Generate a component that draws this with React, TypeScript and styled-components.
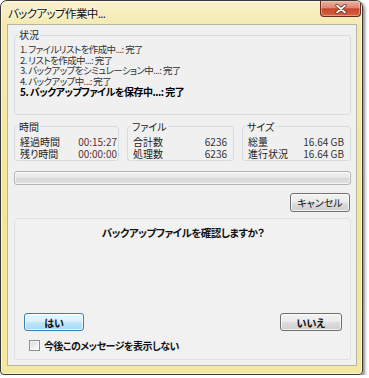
import styled, { createGlobalStyle } from "styled-components";

const jp = `"Noto Sans CJK JP", "Noto Sans", sans-serif`;

const GlobalStyle = createGlobalStyle`
  *, *::before, *::after { box-sizing: border-box; }
  html, body { margin: 0; padding: 0; background: #ffffff; }
  body {
    font-family: ${jp};
    font-feature-settings: "palt";
    color: #1e1e1e;
  }
`;

const steps = [
  "1. ファイルリストを作成中...: 完了",
  "2. リストを作成中...: 完了",
  "3. バックアップをシミュレーション中...: 完了",
  "4. バックアップ中...: 完了",
  "5. バックアップファイルを保存中...: 完了",
];

const stats = [
  {
    title: "時間",
    tone: "#5a3535",
    tight: true,
    rows: [
      ["経過時間", "00:15:27"],
      ["残り時間", "00:00:00"],
    ],
  },
  {
    title: "ファイル",
    tone: "#333333",
    tight: false,
    rows: [
      ["合計数", "6236"],
      ["処理数", "6236"],
    ],
  },
  {
    title: "サイズ",
    tone: "#333333",
    tight: false,
    rows: [
      ["総量", "16.64 GB"],
      ["進行状況", "16.64 GB"],
    ],
  },
];

export default function App() {
  return (
    <>
      <GlobalStyle />
      <Window>
        <TitleBar>
          <Title>バックアップ作業中...</Title>
          <CloseButton aria-label="閉じる">
            <svg width="12" height="10" viewBox="0 0 12 10">
              <path d="M2 1.5 L10 8.5 M10 1.5 L2 8.5" stroke="#5a2418" strokeWidth="3.2" strokeLinecap="round" />
              <path d="M2 1.5 L10 8.5 M10 1.5 L2 8.5" stroke="#ffffff" strokeWidth="1.8" strokeLinecap="round" />
            </svg>
          </CloseButton>
        </TitleBar>

        <Frame>
          <Client>
            <Group>
              <Legend>状況</Legend>
              <StepList>
                {steps.map((s, i) => (
                  <Step key={s} $done={i === steps.length - 1}>
                    {s}
                  </Step>
                ))}
              </StepList>
            </Group>

            <StatsGrid>
              {stats.map((g) => (
                <Group key={g.title}>
                  <Legend>{g.title}</Legend>
                  <StatRows $tight={g.tight}>
                    {g.rows.map(([label, value]) => (
                      <StatRow key={label}>
                        <span>{label}</span>
                        <StatValue $tone={g.tone}>{value}</StatValue>
                      </StatRow>
                    ))}
                  </StatRows>
                </Group>
              ))}
            </StatsGrid>

            <Progress />

            <CancelRow>
              <Button>キャンセル</Button>
            </CancelRow>

            <ConfirmPanel>
              <Question>バックアップファイルを確認しますか？</Question>
              <Spacer />
              <AnswerRow>
                <Button $primary $bold>
                  はい
                </Button>
                <Button $bold $wide>
                  いいえ
                </Button>
              </AnswerRow>
              <CheckRow>
                <CheckBox />
                <span>今後このメッセージを表示しない</span>
              </CheckRow>
            </ConfirmPanel>
          </Client>
        </Frame>
      </Window>
    </>
  );
}

const Window = styled.div`
  width: 363px;
  height: 375px;
  border: 1px solid #3a3a3a;
  border-radius: 7px 7px 4px 4px;
  background: linear-gradient(180deg, #f8f1cc 0%, #f4eab0 24px, #f2e697 60%, #f3e8a0 100%);
  box-shadow: 2px 2px 3px rgba(0, 0, 0, 0.45), inset 0 0 0 1px rgba(255, 255, 255, 0.6);
  display: flex;
  flex-direction: column;
  overflow: hidden;
`;

const TitleBar = styled.div`
  height: 23px;
  display: flex;
  justify-content: space-between;
  align-items: flex-start;
  padding: 0 1px 0 7px;
`;

const Title = styled.div`
  font-size: 11.5px;
  letter-spacing: -0.6px;
  line-height: 24px;
  color: #111;
  text-shadow: 0 0 6px rgba(255, 255, 255, 0.95), 0 0 2px rgba(255, 255, 255, 0.9);
`;

const CloseButton = styled.div`
  width: 41px;
  height: 16px;
  display: flex;
  align-items: center;
  justify-content: center;
  border: 1px solid #6b2a1f;
  border-top: none;
  border-radius: 0 0 4px 4px;
  background: linear-gradient(180deg, #eab3a3 0%, #de8670 45%, #c9482a 52%, #d66242 100%);
  box-shadow: inset 0 0 0 1px rgba(255, 220, 200, 0.45);
`;

const Frame = styled.div`
  flex: 1;
  display: flex;
  padding: 0 5px 8px 6px;
`;

const Client = styled.div`
  flex: 1;
  display: flex;
  flex-direction: column;
  border: 1px solid #b9b5a0;
  background: #f0f0f0;
  padding: 4px 5px 5px 6px;
`;

const Group = styled.fieldset`
  margin: 0;
  padding: 0;
  min-width: 0;
  border: 1px solid #d6dde2;
  border-radius: 3px;
`;

const Legend = styled.legend`
  margin-left: 3px;
  padding: 0 1px;
  font-size: 10px;
  line-height: 12px;
  color: #1e1e1e;
`;

const StepList = styled.div`
  padding: 3px 0 16px 5px;
`;

const Step = styled.div<{ $done?: boolean }>`
  font-size: ${(p) => (p.$done ? 10 : 9.5)}px;
  letter-spacing: ${(p) => (p.$done ? -0.5 : -0.6)}px;
  line-height: 10.7px;
  white-space: nowrap;
  color: ${(p) => (p.$done ? "#000000" : "#333333")};
  font-weight: ${(p) => (p.$done ? 700 : 400)};
`;

const StatsGrid = styled.div`
  margin-top: 6px;
  display: grid;
  grid-template-columns: 105px 1fr 109px;
  column-gap: 8px;
`;

const StatRows = styled.div<{ $tight?: boolean }>`
  padding: 3px ${(p) => (p.$tight ? 1 : 6)}px 0 5px;
`;

const StatRow = styled.div`
  display: flex;
  justify-content: space-between;
  font-size: 10px;
  line-height: 12px;
  color: #222;
  white-space: nowrap;
`;

const StatValue = styled.span<{ $tone: string }>`
  color: ${(p) => p.$tone};
`;

const Progress = styled.div`
  margin-top: 10px;
  height: 14px;
  border: 1px solid #b4b4b4;
  border-radius: 3px;
  background: linear-gradient(180deg, #f4f4f4 0%, #e6e6e6 45%, #d8d8d8 55%, #e2e2e2 100%);
  box-shadow: inset 0 0 0 1px rgba(255, 255, 255, 0.6);
`;

const CancelRow = styled.div`
  margin-top: 8px;
  display: flex;
  justify-content: flex-end;
  padding-right: 1px;
`;

const Button = styled.div<{ $primary?: boolean; $bold?: boolean; $wide?: boolean }>`
  width: ${(p) => (p.$wide ? 62 : 60)}px;
  height: ${(p) => (p.$bold ? 18 : 19)}px;
  display: flex;
  align-items: center;
  justify-content: center;
  font-size: 10px;
  font-weight: ${(p) => (p.$bold ? 700 : 400)};
  color: #111;
  border: 1px solid ${(p) => (p.$primary ? "#3c7fb1" : "#707070")};
  border-radius: 3px;
  background: ${(p) =>
    p.$primary
      ? "linear-gradient(180deg, #eaf6fd 0%, #d9f0fc 48%, #bee6fd 52%, #a7d9f5 100%)"
      : "linear-gradient(180deg, #f2f2f2 0%, #ebebeb 48%, #dddddd 52%, #cfcfcf 100%)"};
  box-shadow: inset 0 0 0 1px rgba(255, 255, 255, 0.7);
`;

const ConfirmPanel = styled.div`
  flex: 1;
  margin-top: 6px;
  display: flex;
  flex-direction: column;
  border: 1px solid #dfe3e6;
  border-radius: 3px;
  background: #f1f1f1;
  padding: 7px 8px 8px 9px;
`;

const Question = styled.div`
  text-align: center;
  font-size: 10.5px;
  letter-spacing: -0.5px;
  line-height: 14px;
  font-weight: 700;
  color: #111;
`;

const Spacer = styled.div`
  flex: 1;
`;

const AnswerRow = styled.div`
  display: flex;
  justify-content: space-between;
`;

const CheckRow = styled.div`
  margin-top: 9px;
  margin-left: 5px;
  display: flex;
  align-items: center;
  gap: 4px;
  font-size: 10px;
  letter-spacing: -0.5px;
  line-height: 11px;
  font-weight: 700;
  color: #111;
`;

const CheckBox = styled.div`
  width: 11px;
  height: 11px;
  border: 1px solid #8e8f8f;
  background: linear-gradient(135deg, #d6d6d6 0%, #f0f0f0 60%, #fbfbfb 100%);
  box-shadow: inset 0 0 0 1px rgba(255, 255, 255, 0.7);
`;
